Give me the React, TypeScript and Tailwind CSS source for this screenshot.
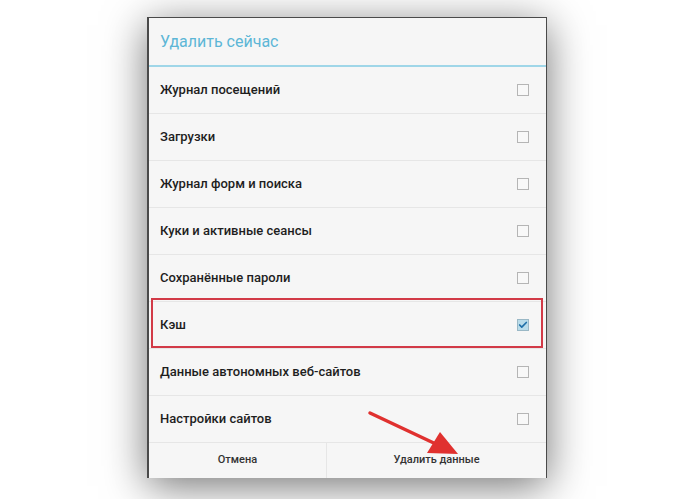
import { Check } from "lucide-react";

const items = [
  { label: "Журнал посещений", checked: false },
  { label: "Загрузки", checked: false },
  { label: "Журнал форм и поиска", checked: false },
  { label: "Куки и активные сеансы", checked: false },
  { label: "Сохранённые пароли", checked: false },
  { label: "Кэш", checked: true },
  { label: "Данные автономных веб-сайтов", checked: false },
  { label: "Настройки сайтов", checked: false },
];

export default function App() {
  return (
    <div
      className="w-[699px] h-[499px] bg-white overflow-hidden pt-[17px] pl-[147px] relative"
      style={{ fontFamily: "Roboto, 'Noto Sans', sans-serif" }}
    >
      {/* Dialog */}
      <div className="w-[400px] h-[461px] bg-[#f6f6f6] border-l-2 border-t border-r border-[#4a4a4a] shadow-[0_8px_40px_rgba(0,0,0,0.55)] flex flex-col">
        <div className="h-[47px] flex items-center px-[11px] text-[16px] text-[#5db6d6]">
          Удалить сейчас
        </div>
        <div className="h-[2px] bg-[#9fd6e8]" />

        {items.map((item, i) => (
          <div
            key={i}
            className="h-[47px] flex items-center justify-between pl-[11px] pr-[17px] text-[13px] font-medium text-[#1e1e1e] border-b border-[#e6e6e6]"
          >
            <span>{item.label}</span>
            {item.checked ? (
              <div className="w-[12px] h-[12px] bg-[#b9dcea] border border-[#9ab8c6] flex items-center justify-center">
                <Check className="w-[12px] h-[12px] text-[#1f6fa8]" strokeWidth={4} />
              </div>
            ) : (
              <div className="w-[12px] h-[12px] border border-[#b5b5b5] bg-[#f8f8f8]" />
            )}
          </div>
        ))}

        <div className="flex-1 flex text-[11px] font-medium text-[#333]">
          <div className="w-[178px] flex items-center justify-center border-r border-[#e6e6e6]">Отмена</div>
          <div className="flex-1 flex items-center justify-center">Удалить данные</div>
        </div>
      </div>

      {/* Red highlight */}
      <div className="absolute left-[151px] top-[298px] w-[392px] h-[50px] border-[2.5px] border-[#d23a47]" />

      {/* Arrow */}
      <svg className="absolute left-0 top-0" width="699" height="499" viewBox="0 0 699 499">
        <line x1="370" y1="413" x2="438" y2="445" stroke="#e0312f" strokeWidth="3.5" strokeLinecap="round" />
        <polygon points="458,454 427,453 440,432" fill="#e0312f" />
      </svg>
    </div>
  );
}
